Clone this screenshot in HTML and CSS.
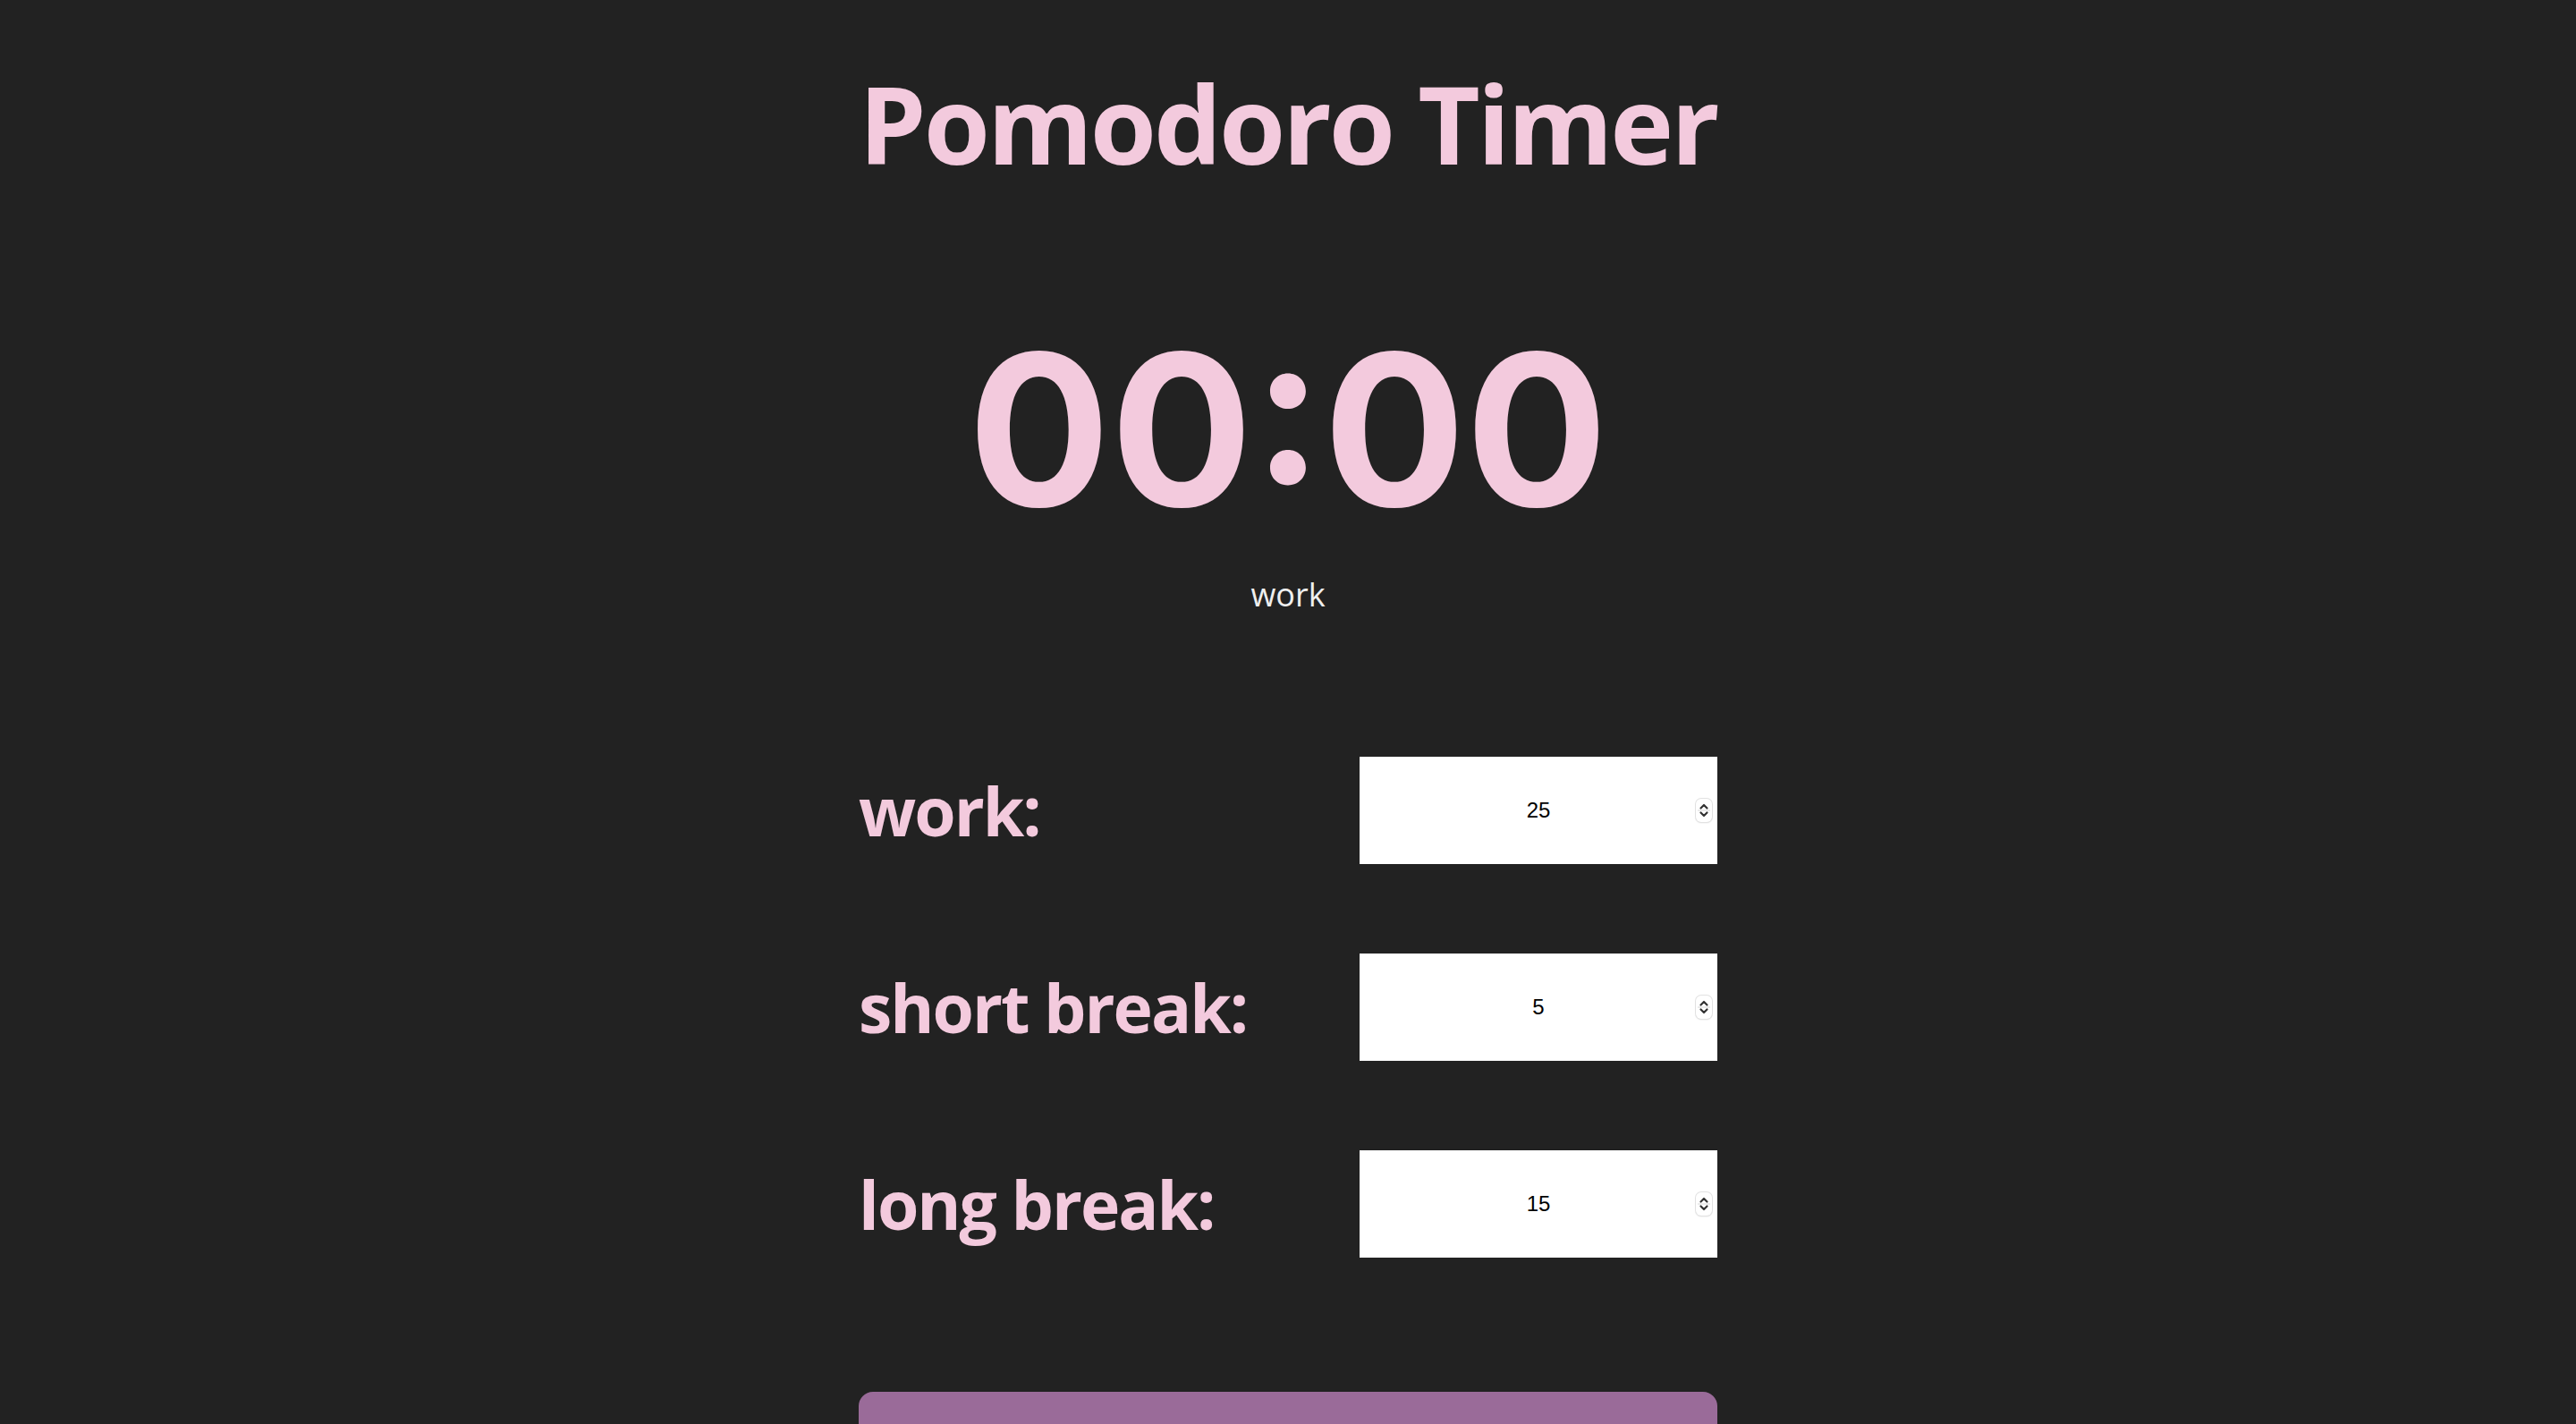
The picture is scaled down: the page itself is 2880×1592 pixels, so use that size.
FILE: index.html
```html
<!DOCTYPE html>
<html lang="en">
<head>
<meta charset="utf-8">
<title>Pomodoro Timer</title>
<link rel="stylesheet" href="styles.css">
</head>
<body>
<main class="app">
  <h1 class="title">Pomodoro Timer</h1>
  <div class="clock">00:00</div>
  <p class="mode">work</p>
  <form class="settings">
    <label class="row">
      <span class="row-label">work:</span>
      <span class="field">
        <input class="num" type="number" value="25">
        <span class="spin"><svg viewBox="0 0 18 26" width="18" height="26"><path d="M5.5 10.5 9 7 12.5 10.5" /><path d="M5.5 15.5 9 19 12.5 15.5" /><line x1="2" y1="13" x2="16" y2="13" class="sep"/></svg></span>
      </span>
    </label>
    <label class="row">
      <span class="row-label">short break:</span>
      <span class="field">
        <input class="num" type="number" value="5">
        <span class="spin"><svg viewBox="0 0 18 26" width="18" height="26"><path d="M5.5 10.5 9 7 12.5 10.5" /><path d="M5.5 15.5 9 19 12.5 15.5" /><line x1="2" y1="13" x2="16" y2="13" class="sep"/></svg></span>
      </span>
    </label>
    <label class="row">
      <span class="row-label">long break:</span>
      <span class="field">
        <input class="num" type="number" value="15">
        <span class="spin"><svg viewBox="0 0 18 26" width="18" height="26"><path d="M5.5 10.5 9 7 12.5 10.5" /><path d="M5.5 15.5 9 19 12.5 15.5" /><line x1="2" y1="13" x2="16" y2="13" class="sep"/></svg></span>
      </span>
    </label>
  </form>
  <button class="start" type="button">start</button>
</main>
</body>
</html>
```
FILE: styles.css
```css
html, body {
  margin: 0;
  padding: 0;
  background: #222222;
}
html {
  overflow: hidden;
}
body {
  font-family: "Open Sans", "Noto Sans", sans-serif;
}
.app {
  width: 960px;
  margin: 0 auto;
  padding-top: 78px;
  display: flex;
  flex-direction: column;
}
.title {
  margin: 0;
  font-size: 120px;
  line-height: 120px;
  font-weight: 700;
  letter-spacing: -3px;
  white-space: nowrap;
  text-align: center;
  color: #f3cadd;
}
.clock {
  margin-top: 162px;
  font-family: Inter, "Open Sans", sans-serif;
  font-size: 236px;
  line-height: 240px;
  font-weight: 700;
  text-align: center;
  white-space: nowrap;
  color: #f3cadd;
}
.mode {
  margin: 47px 0 0;
  font-size: 36px;
  line-height: 36px;
  text-align: center;
  color: #efefef;
}
.settings {
  margin: 163px 0 0;
  display: flex;
  flex-direction: column;
  gap: 100px;
}
.row {
  display: flex;
  justify-content: space-between;
  align-items: center;
  height: 120px;
}
.row-label {
  font-size: 75px;
  line-height: 75px;
  font-weight: 700;
  letter-spacing: -2px;
  white-space: nowrap;
  color: #f3cadd;
}
.field {
  position: relative;
  width: 400px;
  height: 120px;
}
.num {
  display: block;
  width: 100%;
  height: 100%;
  box-sizing: border-box;
  margin: 0;
  padding: 0;
  border: 0;
  background: #ffffff;
  color: #000000;
  text-align: center;
  font-family: "Liberation Sans", Arial, sans-serif;
  font-size: 24px;
  outline: none;
  -moz-appearance: textfield;
  appearance: textfield;
}
.num::-webkit-inner-spin-button,
.num::-webkit-outer-spin-button {
  -webkit-appearance: none;
  margin: 0;
}
.spin {
  position: absolute;
  right: 6px;
  top: 47px;
  width: 18px;
  height: 26px;
  box-sizing: border-box;
  border-radius: 6px;
  background: #ffffff;
  box-shadow: 0 0 0 1px #e2e2e2, 0 1px 2px rgba(0, 0, 0, 0.14);
  pointer-events: none;
}
.spin svg {
  display: block;
  fill: none;
  stroke: #333333;
  stroke-width: 2.2;
  stroke-linecap: round;
  stroke-linejoin: round;
}
.spin .sep {
  stroke: #d8d8d8;
  stroke-width: 1;
  stroke-linecap: butt;
}
.start {
  margin-top: 150px;
  height: 120px;
  border: 0;
  border-radius: 16px;
  background: #9a6b99;
  color: #f3cadd;
  font-family: "Open Sans", sans-serif;
  font-size: 48px;
  font-weight: 700;
}
```
